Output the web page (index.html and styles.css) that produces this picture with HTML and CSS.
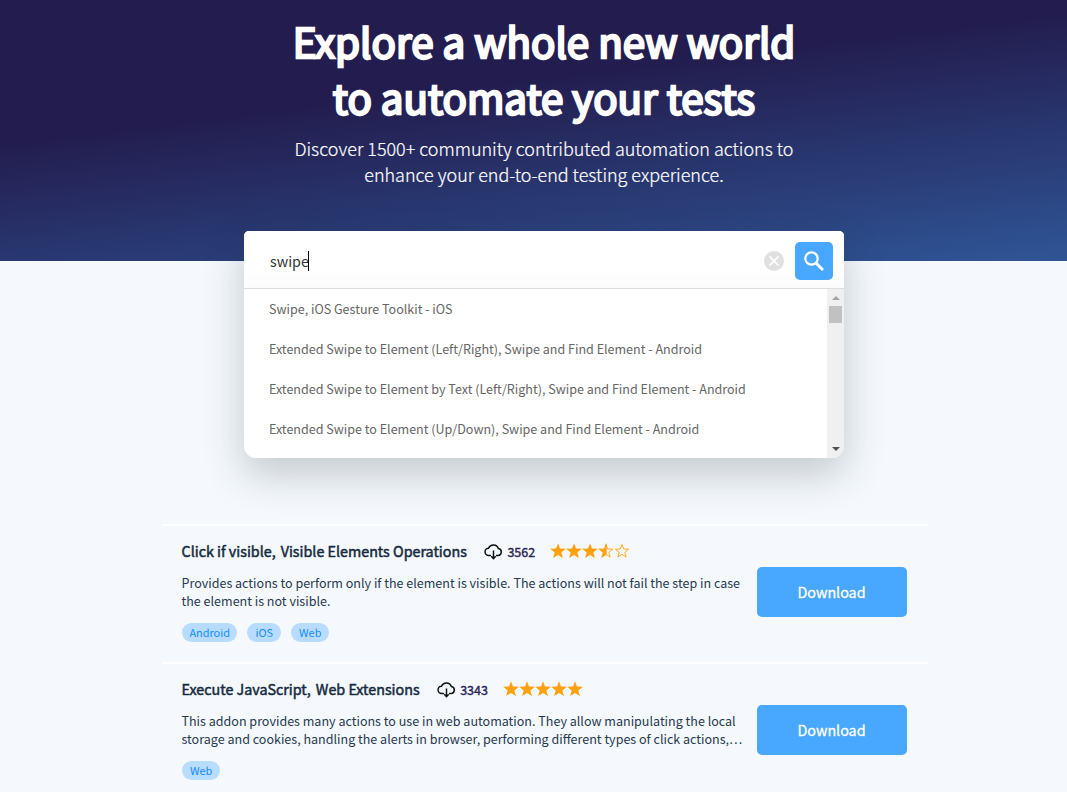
FILE: index.html
```html
<!DOCTYPE html>
<html lang="en">
<head>
<meta charset="utf-8">
<title>Addons</title>
<link rel="stylesheet" href="styles.css">
</head>
<body>
<svg width="0" height="0" class="defs">
  <symbol id="star" viewBox="0 0 16 16"><path d="M8 .2l2 5.400 5.900.2-4.600 3.600 1.600 5.700L8 11.900l-4.900 3.200 1.600-5.700L.1 5.800l5.900-.2z" fill="#ffa10a"/></symbol>
  <symbol id="star-empty" viewBox="0 0 16 16"><path d="M8 1.500l1.700 4.500 5 .2-3.900 3.100 1.300 4.800L8 11.300l-4.100 2.800 1.300-4.800-3.900-3.100 5-.2z" fill="none" stroke="#ffa10a" stroke-width=".9"/></symbol>
  <symbol id="star-half" viewBox="0 0 16 16"><path d="M8 1.500l1.700 4.500 5 .2-3.900 3.100 1.300 4.800L8 11.300z" fill="none" stroke="#ffa10a" stroke-width=".9"/><path d="M8.400.2v11.500L3.100 15.100l1.600-5.700L.1 5.800l5.900-.2 2-5.400z" fill="#ffa10a"/></symbol>
  <symbol id="cloud" viewBox="0 0 18 16"><path d="M6.600 11.700H4.500a3.400 3.400 0 0 1-.2-6.800A5 5 0 0 1 13.600 5.200a3.300 3.300 0 0 1 .1 6.500h-2.300M9 7v7.500M6.900 12.600L9 14.800l2.100-2.200" fill="none" stroke="#111" stroke-width="1.400"/></symbol>
</svg>
<header class="hero">
  <h1 class="title">Explore a whole new world<br>to automate your tests</h1>
  <p class="subtitle">Discover 1500+ community contributed automation actions to<br>enhance your end-to-end testing experience.</p>
</header>
<section class="search">
  <div class="search-bar">
    <span class="query">swipe</span><span class="caret"></span>
    <svg class="clear" viewBox="0 0 20 20"><circle cx="10" cy="10" r="10" fill="#e0e0e0"/><path d="M5.400 5.400l9.200 9.200M14.600 5.400l-9.200 9.200" stroke="#fff" stroke-width="1.500"/></svg>
    <span class="go"><svg width="20" height="20" viewBox="0 0 20 20"><circle cx="7.500" cy="7.500" r="6.200" fill="none" stroke="#fff" stroke-width="2.200"/><path d="M12 12l7 7" stroke="#fff" stroke-width="3"/></svg></span>
  </div>
  <div class="results">
    <ul class="options">
      <li>Swipe, iOS Gesture Toolkit - iOS</li>
      <li>Extended Swipe to Element (Left/Right), Swipe and Find Element - Android</li>
      <li>Extended Swipe to Element by Text (Left/Right), Swipe and Find Element - Android</li>
      <li>Extended Swipe to Element (Up/Down), Swipe and Find Element - Android</li>
    </ul>
    <div class="scrollbar"><i class="up"></i><i class="thumb"></i><i class="down"></i></div>
  </div>
</section>
<main class="addons">
  <article class="addon">
    <div class="info">
      <div class="head"><h2><span>Click if visible,</span><span>Visible Elements Operations</span></h2>
        <svg class="cloud"><use href="#cloud"/></svg><b class="count">3562</b>
        <span class="stars"><svg><use href="#star"/></svg><svg><use href="#star"/></svg><svg><use href="#star"/></svg><svg><use href="#star-half"/></svg><svg><use href="#star-empty"/></svg></span>
      </div>
      <p class="desc">Provides actions to perform only if the element is visible. The actions will not fail the step in case<br>the element is not visible.</p>
      <div class="tags"><span>Android</span><span>iOS</span><span>Web</span></div>
    </div>
    <a class="download">Download</a>
  </article>
  <article class="addon">
    <div class="info">
      <div class="head"><h2><span>Execute JavaScript,</span><span>Web Extensions</span></h2>
        <svg class="cloud"><use href="#cloud"/></svg><b class="count">3343</b>
        <span class="stars"><svg><use href="#star"/></svg><svg><use href="#star"/></svg><svg><use href="#star"/></svg><svg><use href="#star"/></svg><svg><use href="#star"/></svg></span>
      </div>
      <p class="desc">This addon provides many actions to use in web automation. They allow manipulating the local<br>storage and cookies, handling the alerts in browser, performing different types of click actions,…</p>
      <div class="tags"><span>Web</span></div>
    </div>
    <a class="download">Download</a>
  </article>
</main>
</body>
</html>
```
FILE: styles.css
```css
* { box-sizing: border-box; margin: 0; padding: 0; }
body { background: #f5f9fe; font-family: "Noto Sans CJK SC", "Open Sans", sans-serif; color: #162b3f; width: 1067px; height: 792px; overflow: hidden; }
.defs { display: block; height: 0; }
.hero { height: 261px; padding: 13px 0 0 21px; text-align: center; color: #fff; background: linear-gradient(173deg, #231d4f 37%, #2f5596 100%); }
.title { font-size: 40.3px; line-height: 56px; font-weight: 400; -webkit-text-stroke: 2.4px #fff; white-space: nowrap; }
.subtitle { margin-top: 10px; font-size: 17.95px; line-height: 26px; font-weight: 300; -webkit-text-stroke: .2px #fff; white-space: nowrap; }
.search { position: relative; width: 600px; height: 227px; margin: -30px 0 0 244px; border-radius: 5px 5px 12px 12px; background: #fff; box-shadow: 0 16px 40px rgba(35, 45, 40, .24); }
.search-bar { height: 58px; border-bottom: 1px solid #ddd; border-radius: 5px 5px 0 0; padding: 2px 11px 0 26px; display: flex; align-items: center; background: linear-gradient(#fff 60%, #fbfbfb); }
.query { font-size: 14.3px; color: #333; line-height: 24px; padding-top: 1px; }
.caret { width: 1px; height: 20px; margin-left: -1px; background: #000; }
.clear { width: 20px; height: 20px; margin-left: auto; margin-right: 11px; }
.go { width: 38px; height: 38px; border-radius: 5px; background: #48a7ff; display: flex; align-items: center; justify-content: center; }
.results { display: flex; height: 169px; overflow: hidden; border-radius: 0 0 12px 12px; }
.options { flex: 1; list-style: none; padding-left: 25px; font-size: 12.54px; line-height: 40px; color: #666; white-space: nowrap; }
.options li { height: 40px; }
.scrollbar { width: 17px; background: #f0f0f0; display: flex; flex-direction: column; align-items: center; padding: 7px 0 7px; }
.up { border: 4px solid transparent; border-top: 0; border-bottom: 4px solid #a3a3a3; }
.thumb { width: 13px; height: 17px; margin-top: 6px; background: #c1c1c1; }
.down { margin-top: auto; border: 4px solid transparent; border-bottom: 0; border-top: 4px solid #505050; }
.addons { margin: 66px 0 0 162px; width: 766px; }
.addon { height: 138px; border-top: 2px solid #fff; display: flex; padding: 13px 21px 0 19.5px; justify-content: space-between; align-items: flex-start; }
.head { display: flex; align-items: center; height: 24px; white-space: nowrap; }
h2 { font-size: 14.32px; line-height: 24px; font-weight: 400; -webkit-text-stroke: .5px #162b3f; display: flex; gap: 5px; }
.cloud { width: 19px; height: 17px; margin-left: 17px; margin-top: 1px; }
.count { font-size: 12.5px; font-weight: 400; -webkit-text-stroke: .4px #2b2456; color: #2b2456; margin-left: 4.500px; }
.stars { display: flex; margin-left: 15px; }
.stars svg { width: 16px; height: 16px; }
.desc { font-size: 12.54px; line-height: 18px; margin-top: 11px; white-space: nowrap; color: #263a4e; }
.tags { display: flex; gap: 10px; margin-top: 13px; padding-left: .5px; }
.tags span { height: 19px; line-height: 19px; padding: 0 7.500px; border-radius: 10px; background: #b8dcff; color: #138cff; font-size: 10.9px; }
.tags span:not(:first-child), .tags span:only-child { padding: 0 8px; }
.download { width: 150px; height: 50px; margin-top: 28px; border-radius: 5px; background: #48a7ff; color: #fff; font-size: 14.3px; line-height: 50px; text-align: center; text-indent: -1px; -webkit-text-stroke: .3px #fff; }
```
